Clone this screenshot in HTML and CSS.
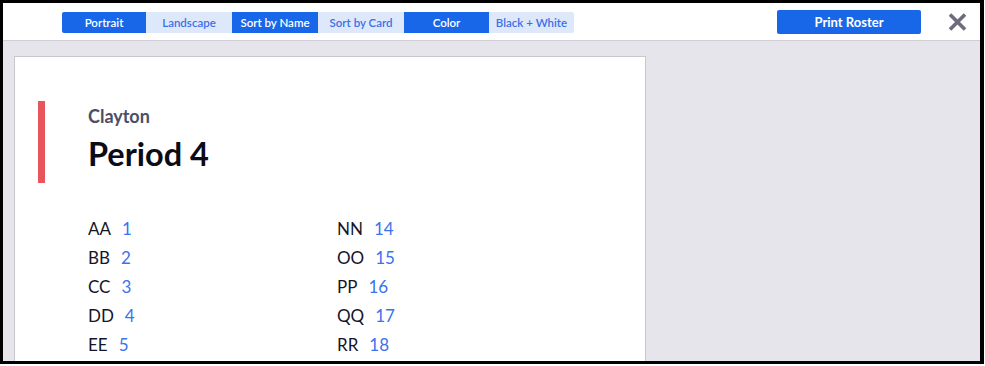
FILE: index.html
```html
<!DOCTYPE html>
<html>
<head>
<meta charset="utf-8">
<link rel="stylesheet" href="styles.css">
</head>
<body>
<div class="frame">
  <div class="toolbar">
    <div class="group">
      <button class="seg first active">Portrait</button>
      <button class="seg">Landscape</button>
      <button class="seg active">Sort by Name</button>
      <button class="seg">Sort by Card</button>
      <button class="seg narrow active">Color</button>
      <button class="seg narrow last">Black + White</button>
    </div>
    <div class="spacer"></div>
    <button class="print">Print Roster</button>
    <button class="close" aria-label="Close">
      <svg width="19" height="18" viewBox="0 0 19 18"><path d="M2 1.5 L17 16.5 M17 1.5 L2 16.5" stroke="#6d6c7e" stroke-width="3.6" fill="none"/></svg>
    </button>
  </div>
  <div class="stage">
    <div class="card">
      <div class="heading">
        <div class="teacher">Clayton</div>
        <div class="period">Period 4</div>
      </div>
      <ul class="roster">
        <li><span class="name">AA</span><span class="num">1</span></li>
        <li><span class="name">BB</span><span class="num">2</span></li>
        <li><span class="name">CC</span><span class="num">3</span></li>
        <li><span class="name">DD</span><span class="num">4</span></li>
        <li><span class="name">EE</span><span class="num">5</span></li>
        <li><span class="name">FF</span><span class="num">6</span></li>
        <li><span class="name">GG</span><span class="num">7</span></li>
        <li><span class="name">HH</span><span class="num">8</span></li>
        <li><span class="name">II</span><span class="num">9</span></li>
        <li><span class="name">JJ</span><span class="num">10</span></li>
        <li><span class="name">KK</span><span class="num">11</span></li>
        <li><span class="name">LL</span><span class="num">12</span></li>
        <li><span class="name">MM</span><span class="num">13</span></li>
        <li><span class="name">NN</span><span class="num">14</span></li>
        <li><span class="name">OO</span><span class="num">15</span></li>
        <li><span class="name">PP</span><span class="num">16</span></li>
        <li><span class="name">QQ</span><span class="num">17</span></li>
        <li><span class="name">RR</span><span class="num">18</span></li>
        <li><span class="name">SS</span><span class="num">19</span></li>
        <li><span class="name">TT</span><span class="num">20</span></li>
        <li><span class="name">UU</span><span class="num">21</span></li>
        <li><span class="name">VV</span><span class="num">22</span></li>
        <li><span class="name">WW</span><span class="num">23</span></li>
        <li><span class="name">XX</span><span class="num">24</span></li>
        <li><span class="name">YY</span><span class="num">25</span></li>
        <li><span class="name">ZZ</span><span class="num">26</span></li>
      </ul>
    </div>
  </div>
</div>
</body>
</html>
```
FILE: styles.css
```css
* { box-sizing: border-box; }
html, body { margin: 0; padding: 0; background: #ffffff; }
body { font-family: Lato, "Noto Sans", sans-serif; }

.frame {
  width: 984px;
  height: 364px;
  border-style: solid;
  border-color: #000;
  border-width: 3px 4px 3px 3px;
  display: flex;
  flex-direction: column;
  overflow: hidden;
  background: #e6e5eb;
}

.toolbar {
  flex: none;
  height: 38px;
  background: #fff;
  border-bottom: 1px solid #cfced6;
  display: flex;
  align-items: center;
  padding: 1px 13px 0 59px;
}

.group { display: flex; }

button { font-family: inherit; border: none; margin: 0; cursor: pointer; }

.seg {
  width: 86px;
  height: 21px;
  padding: 0;
  font-size: 11.5px;
  font-weight: 600;
  background: #dde9fb;
  color: #3c6fe6;
}
.seg.first { width: 84px; border-radius: 2px 0 0 2px; }
.seg.narrow { width: 85px; }
.seg.last { border-radius: 0 2px 2px 0; }
.seg.active { background: #1767e8; color: #fff; }

.spacer { flex: 1; }

.print {
  width: 144px;
  height: 24px;
  border-radius: 2px;
  background: #1767e8;
  color: #fff;
  font-size: 13px;
  font-weight: 700;
  padding: 0;
}

.close {
  background: none;
  padding: 0;
  margin-left: 27px;
  width: 19px;
  height: 18px;
  display: flex;
}

.stage {
  flex: 1;
  padding: 15px 0 0 11px;
}

.card {
  width: 632px;
  height: 400px;
  background: #fff;
  border: 1px solid #c9c8cf;
  padding: 44px 0 0 23px;
}

.heading {
  border-left: 7px solid #e8565c;
  padding: 4px 0 10px 43px;
}

.teacher {
  font-size: 18px;
  font-weight: 700;
  color: #4a4e68;
  margin-bottom: 7px;
}

.period {
  font-size: 32.5px;
  font-weight: 700;
  color: #0c0c14;
}

.roster {
  list-style: none;
  margin: 31px 0 0 50px;
  padding: 0;
  display: grid;
  grid-template-columns: 249px 249px;
  grid-template-rows: repeat(13, 29px);
  grid-auto-flow: column;
  font-size: 17px;
  line-height: 29px;
}

.name { color: #15152a; }
.num { color: #3a72f0; margin-left: 11px; }
```
